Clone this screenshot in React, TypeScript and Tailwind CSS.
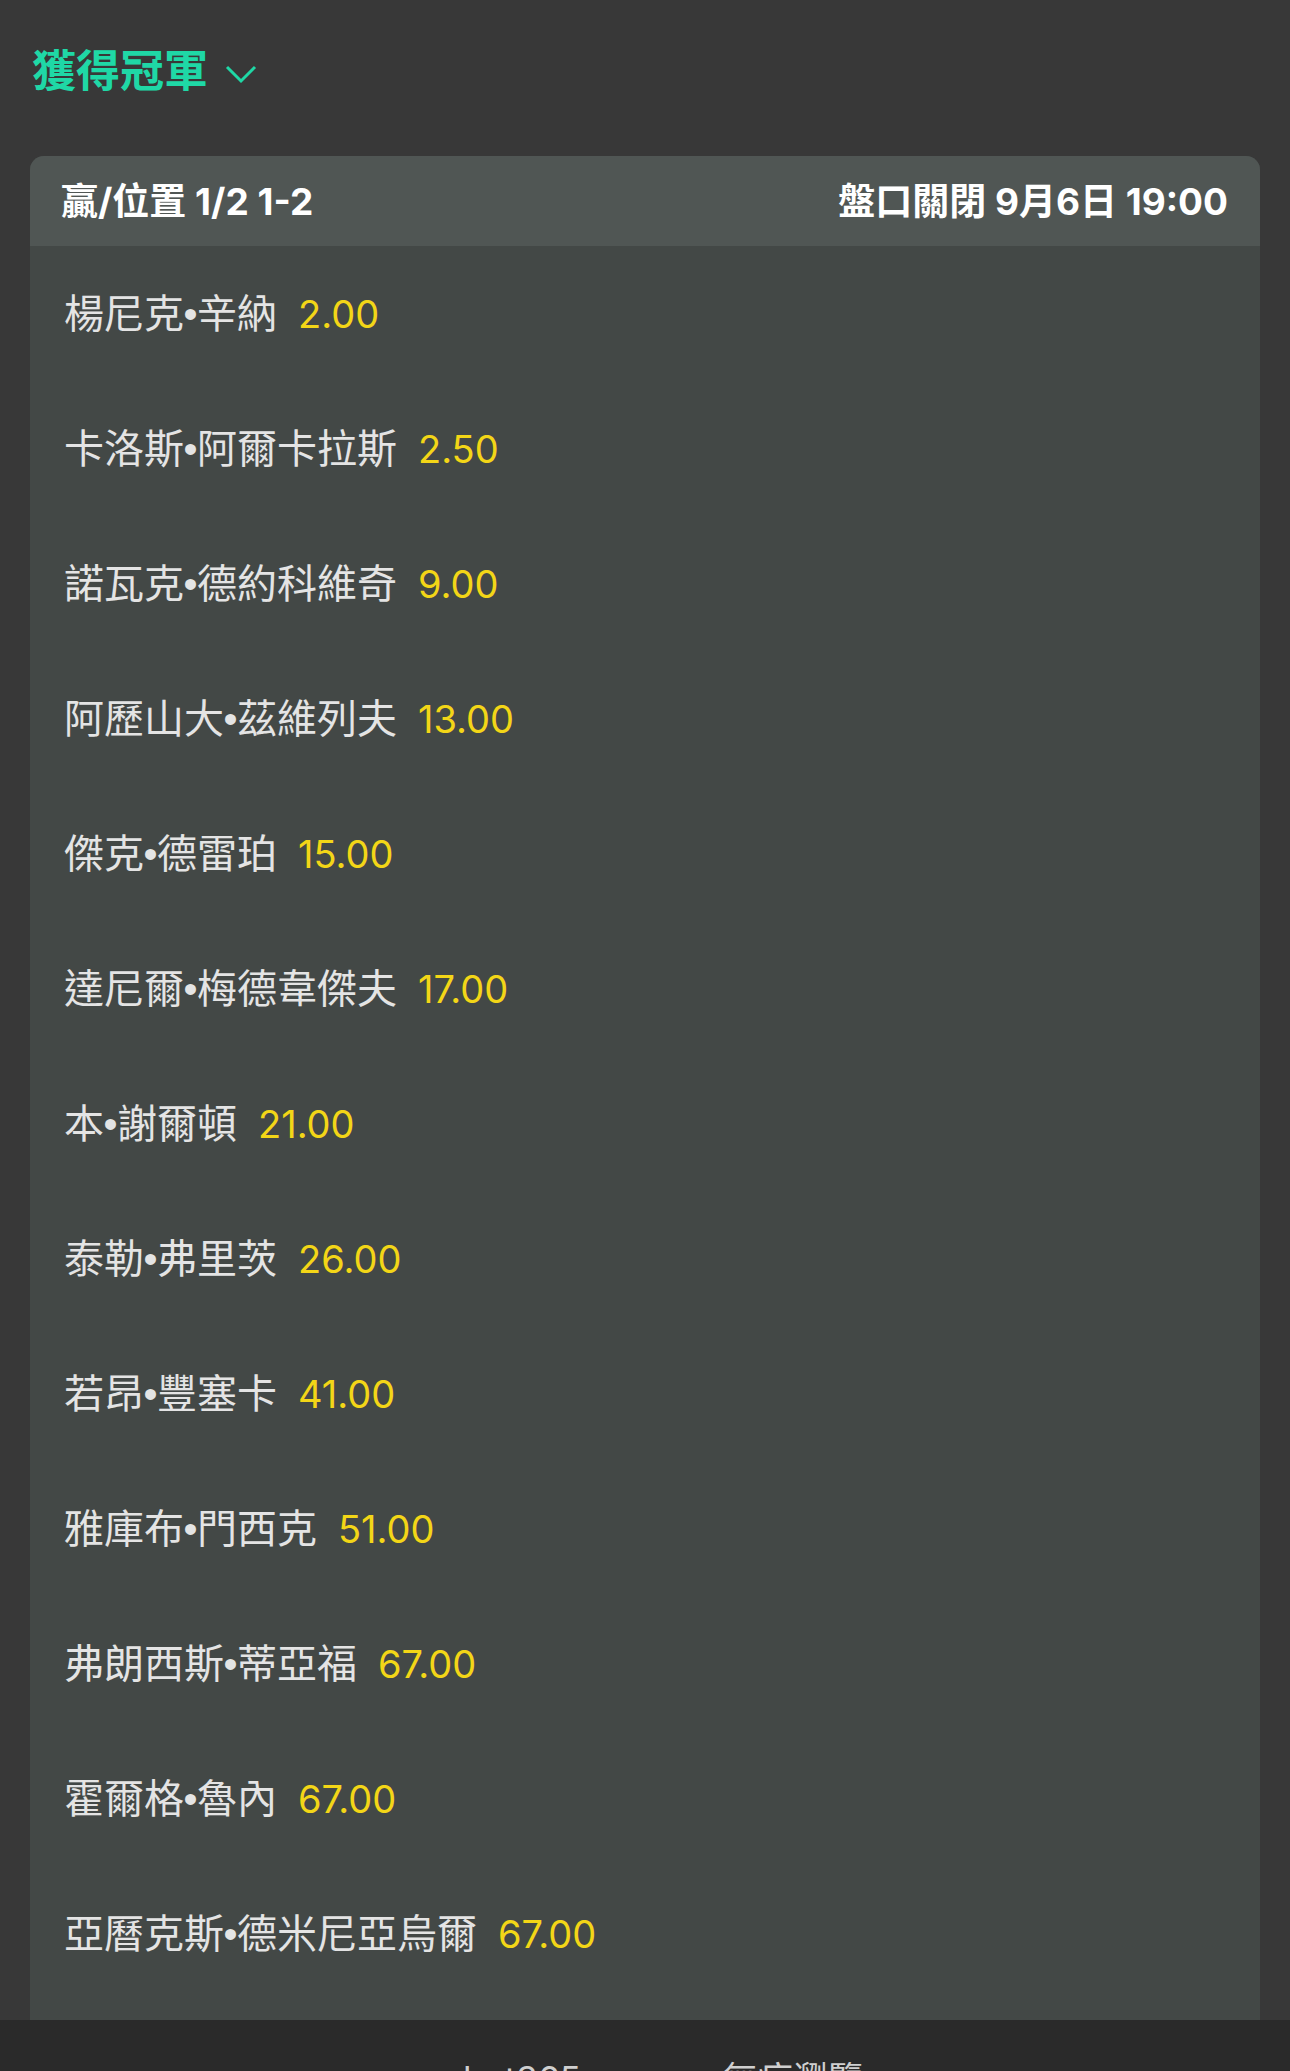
import React from 'react';

interface Runner {
  first: string;
  last: string;
  odds: string;
}

const runners: Runner[] = [
  { first: '楊尼克', last: '辛納', odds: '2.00' },
  { first: '卡洛斯', last: '阿爾卡拉斯', odds: '2.50' },
  { first: '諾瓦克', last: '德約科維奇', odds: '9.00' },
  { first: '阿歷山大', last: '茲維列夫', odds: '13.00' },
  { first: '傑克', last: '德雷珀', odds: '15.00' },
  { first: '達尼爾', last: '梅德韋傑夫', odds: '17.00' },
  { first: '本', last: '謝爾頓', odds: '21.00' },
  { first: '泰勒', last: '弗里茨', odds: '26.00' },
  { first: '若昂', last: '豐塞卡', odds: '41.00' },
  { first: '雅庫布', last: '門西克', odds: '51.00' },
  { first: '弗朗西斯', last: '蒂亞福', odds: '67.00' },
  { first: '霍爾格', last: '魯內', odds: '67.00' },
  { first: '亞曆克斯', last: '德米尼亞烏爾', odds: '67.00' },
];

const font = { fontFamily: '"Inter", "Noto Sans CJK TC", sans-serif' };

export default function App() {
  return (
    <div className="w-[1290px] h-[2071px] overflow-hidden bg-[#383838] flex flex-col" style={font}>
      {/* Title */}
      <div className="h-[156px] flex items-start pt-[49px] pl-[32px]">
        <button className="flex items-center gap-[17px] text-[#1fd8a6]">
          <span className="text-[44px] font-bold leading-none">獲得冠軍</span>
          <svg className="w-[32px] h-[22px] mt-[6px]" viewBox="0 0 32 22" fill="none" stroke="currentColor" strokeWidth={3}>
            <path d="M2 4l14 14L30 4" />
          </svg>
        </button>
      </div>

      {/* Market card */}
      <div className="mx-[30px] rounded-t-[14px] overflow-hidden bg-[#434846] pb-[19px]">
        <div className="h-[90px] bg-[#505654] flex items-center justify-between pl-[31px] pr-[32px] text-white font-bold text-[37px] leading-none">
          <span>贏/位置 1/2 1-2</span>
          <span>盤口關閉 9月6日 19:00</span>
        </div>
        <div className="flex flex-col">
          {runners.map((r) => (
            <div key={r.first + r.last} className="h-[135px] flex items-center pl-[34px] text-[40px] leading-none">
              <span className="flex items-center text-[#e4e4e4]">
                <span>{r.first}</span>
                <span className="inline-flex w-[13px] justify-center font-['Liberation_Sans']">•</span>
                <span>{r.last}</span>
              </span>
              <span className="ml-[21px] text-[#f3d617] text-[38px]">{r.odds}</span>
            </div>
          ))}
        </div>
      </div>

      {/* Browser toolbar, mostly cut off */}
      <div className="flex-1 bg-[#2a2a2a] relative">
        <div className="absolute left-[428px] top-[42px] flex items-center text-[#cfcfcf] text-[35px] leading-none">
          <span className="w-[13px] h-[13px] mr-[22px] rounded-full border-[2px] border-[#cfcfcf] mt-[6px]" />
          <span>bet365</span>
          <span className="ml-[142px]">無痕瀏覽</span>
        </div>
      </div>
    </div>
  );
}
